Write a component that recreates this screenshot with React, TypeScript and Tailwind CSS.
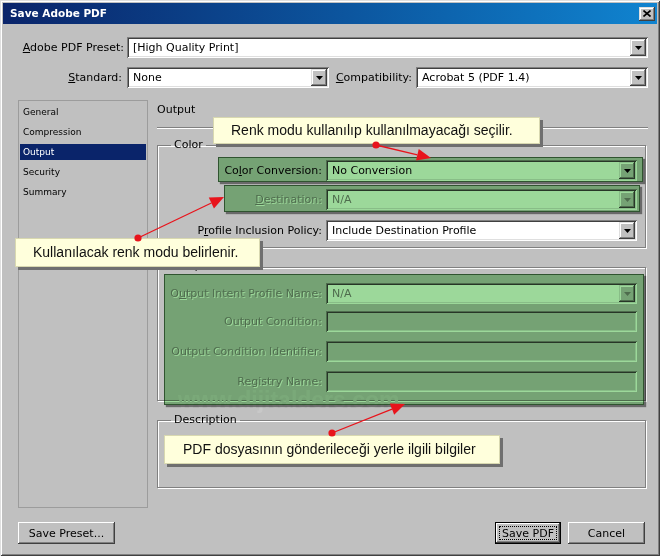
import React from "react";

const RAISED =
  "shadow-[inset_-1px_-1px_0_#404040,inset_1px_1px_0_#dfdfdf,inset_-2px_-2px_0_#808080,inset_2px_2px_0_#fff]";
const SUNKEN =
  "shadow-[inset_1px_1px_0_#808080,inset_-1px_-1px_0_#fff,inset_2px_2px_0_#404040,inset_-2px_-2px_0_#dfdfdf]";
const DIS = "text-[#808080] [text-shadow:1px_1px_0_#fff]";

function DropBtn({ disabled }: { disabled?: boolean }) {
  return (
    <div className={`w-[16px] h-full bg-[#c0c0c0] flex items-center justify-center ${RAISED}`}>
      <svg width="7" height="4" viewBox="0 0 7 4">
        <path d="M0 0h7L3.5 4z" fill={disabled ? "#808080" : "#000"} />
      </svg>
    </div>
  );
}

function Select({
  value,
  disabled,
  className = "",
}: {
  value: string;
  disabled?: boolean;
  className?: string;
}) {
  return (
    <div className={`h-[21px] bg-white flex items-stretch p-[2px] ${SUNKEN} ${className}`}>
      <div className={`flex-1 flex items-center pl-[4px] whitespace-nowrap ${disabled ? "text-[#808080]" : "text-black"}`}>
        {value}
      </div>
      <DropBtn disabled={disabled} />
    </div>
  );
}

function Input({ className = "" }: { className?: string }) {
  return <div className={`h-[21px] bg-[#c0c0c0] ${SUNKEN} ${className}`} />;
}

function Row({
  label,
  children,
  disabled,
  className = "",
}: {
  label: React.ReactNode;
  children: React.ReactNode;
  disabled?: boolean;
  className?: string;
}) {
  return (
    <div className={`flex items-center h-[21px] ${className}`}>
      <div className={`flex-1 text-right pr-[4px] whitespace-nowrap ${disabled ? DIS : ""}`}>{label}</div>
      {children}
    </div>
  );
}

function U({ children }: { children: React.ReactNode }) {
  return <span className="underline underline-offset-[1px]">{children}</span>;
}

function Btn({
  children,
  def,
  className = "",
}: {
  children: React.ReactNode;
  def?: boolean;
  className?: string;
}) {
  if (def) {
    return (
      <div className={`h-[22px] border border-black bg-[#c0c0c0] ${className}`}>
        <div className="h-full flex items-center justify-center shadow-[inset_-1px_-1px_0_#404040,inset_1px_1px_0_#fff,inset_-2px_-2px_0_#808080] p-[3px]">
          <div className="w-full h-full border border-dotted border-black flex items-center justify-center">
            {children}
          </div>
        </div>
      </div>
    );
  }
  return (
    <div
      className={`h-[22px] flex items-center justify-center bg-[#c0c0c0] shadow-[inset_-1px_-1px_0_#404040,inset_1px_1px_0_#fff,inset_-2px_-2px_0_#808080] ${className}`}
    >
      {children}
    </div>
  );
}

function Arrow({ x1, y1, x2, y2 }: { x1: number; y1: number; x2: number; y2: number }) {
  const dx = x2 - x1;
  const dy = y2 - y1;
  const L = Math.hypot(dx, dy);
  const ux = dx / L;
  const uy = dy / L;
  const hl = 14;
  const hw = 6;
  const bx = x2 - ux * hl;
  const by = y2 - uy * hl;
  const pts = `${x2},${y2} ${bx - uy * hw},${by + ux * hw} ${bx + uy * hw},${by - ux * hw}`;
  return (
    <g>
      <line x1={x1} y1={y1} x2={bx} y2={by} stroke="#e8141c" strokeWidth="1.3" />
      <polygon points={pts} fill="#e8141c" />
      <circle cx={x1} cy={y1} r="3.6" fill="#e8141c" />
    </g>
  );
}

const TIP =
  "absolute bg-[#ffffdc] border border-[#d8d8b0] shadow-[3px_3px_0_#6f6f6f] flex items-center font-['Liberation_Sans',Arial,sans-serif] text-[14px] text-[#111] whitespace-nowrap";
const GREEN =
  "absolute bg-[#9cd89a] mix-blend-multiply border border-[#3f6f3f] shadow-[2px_2px_1px_rgba(0,0,0,0.45)]";

export default function App() {
  const items = ["General", "Compression", "Output", "Security", "Summary"];
  return (
    <div className="relative w-[664px] h-[556px] bg-white overflow-hidden font-['DejaVu_Sans',sans-serif] text-[11px] leading-[13px] text-black">
      <div className="w-[660px] h-[556px] bg-[#c0c0c0] p-[3px] flex flex-col shadow-[inset_1px_1px_0_#dfdfdf,inset_-1px_-1px_0_#404040,inset_2px_2px_0_#fff,inset_-2px_-2px_0_#808080]">
        {/* title bar */}
        <div className="h-[21px] flex items-center justify-between bg-linear-to-r from-[#0a246a] to-[#1084d0] pl-[7px] pr-[2px]">
          <span className="text-white font-bold text-[10.5px]">Save Adobe PDF</span>
          <div className={`w-[16px] h-[14px] bg-[#c0c0c0] flex items-center justify-center ${RAISED}`}>
            <svg width="8" height="7" viewBox="0 0 8 7">
              <path d="M0.5 0.5L7.5 6.5M7.5 0.5L0.5 6.5" stroke="#000" strokeWidth="1.6" />
            </svg>
          </div>
        </div>

        <div className="flex flex-col pl-[15px] pr-[9px] pt-[13px]">
          {/* row 1 */}
          <div className="flex items-center h-[21px]">
            <div className="w-[109px] text-right pr-[3px] whitespace-nowrap">
              <U>A</U>dobe PDF Preset:
            </div>
            <Select value="[High Quality Print]" className="flex-1" />
          </div>
          {/* row 2 */}
          <div className="flex items-center h-[21px] mt-[9px]">
            <div className="w-[109px] text-right pr-[5px] whitespace-nowrap">
              <U>S</U>tandard:
            </div>
            <Select value="None" className="w-[202px]" />
            <div className="w-[87px] text-right pr-[4px] whitespace-nowrap">
              <U>C</U>ompatibility:
            </div>
            <Select value="Acrobat 5 (PDF 1.4)" className="flex-1" />
          </div>

          {/* main */}
          <div className="flex items-start mt-[12px]">
            <div className="w-[130px] h-[408px] border border-[#9c9c9c] pt-[3px] px-[1px] flex flex-col gap-[4px] text-[9px]">
              {items.map((it) => (
                <div
                  key={it}
                  className={`h-[16px] leading-[16px] pl-[3px] ${it === "Output" ? "bg-[#0a246a] text-white" : ""}`}
                >
                  {it}
                </div>
              ))}
            </div>

            <div className="flex-1 ml-[9px] flex flex-col">
              <div className="pt-[3px] leading-[14px]">Output</div>
              <div className="mt-[10px] h-[2px] border-t border-t-[#808080] border-b border-b-white" />

              {/* Color */}
              <fieldset className="mt-[9px] mr-[2px] h-[110px] border border-[#808080] shadow-[inset_1px_1px_0_#fff,1px_1px_0_#fff] pl-[4px] pr-[8px] pt-[8px]">
                <legend className="ml-[9px] px-[3px] leading-[14px]">Color</legend>
                <Row label={<>Co<U>l</U>or Conversion:</>}>
                  <Select value="No Conversion" className="w-[311px]" />
                </Row>
                <Row disabled className="mt-[8px]" label={<><U>D</U>estination:</>}>
                  <Select value="N/A" disabled className="w-[311px]" />
                </Row>
                <Row className="mt-[10px]" label={<>P<U>r</U>ofile Inclusion Policy:</>}>
                  <Select value="Include Destination Profile" className="w-[311px]" />
                </Row>
              </fieldset>

              {/* PDF/X */}
              <fieldset className="mt-[12px] mr-[2px] h-[141px] border border-[#808080] shadow-[inset_1px_1px_0_#fff,1px_1px_0_#fff] pl-[4px] pr-[8px] pt-[9px]">
                <legend className="ml-[9px] px-[3px] leading-[14px]">PDF/X</legend>
                <Row disabled label={<>O<U>u</U>tput Intent Profile Name:</>}>
                  <Select value="N/A" disabled className="w-[311px]" />
                </Row>
                <Row disabled className="mt-[7px]" label="Output Condition:">
                  <Input className="w-[311px]" />
                </Row>
                <Row disabled className="mt-[9px]" label="Output Condition Identifier:">
                  <Input className="w-[311px]" />
                </Row>
                <Row disabled className="mt-[9px]" label="Registry Name:">
                  <Input className="w-[311px]" />
                </Row>
              </fieldset>

              {/* Description */}
              <fieldset className="mt-[12px] mr-[2px] h-[75px] border border-[#808080] shadow-[inset_1px_1px_0_#fff,1px_1px_0_#fff]">
                <legend className="ml-[13px] px-[3px] leading-[14px]">Description</legend>
              </fieldset>
            </div>
          </div>

          {/* buttons */}
          <div className="flex items-center justify-between mt-[14px] pr-[3px]">
            <Btn className="w-[97px]">Save Preset...</Btn>
            <div className="flex items-center gap-[7px]">
              <Btn def className="w-[66px]">
                Save PDF
              </Btn>
              <Btn className="w-[77px]">Cancel</Btn>
            </div>
          </div>
        </div>
      </div>

      {/* watermark */}
      <div className="absolute left-[178px] top-[388px] font-['Liberation_Sans',Arial,sans-serif] font-bold text-[23px] leading-[24px] text-[#c8c8c8] whitespace-nowrap">
        www.dijitalders.com
      </div>

      {/* green highlights */}
      <div className={`${GREEN} left-[218px] top-[157px] w-[425px] h-[25px]`} />
      <div className={`${GREEN} left-[224px] top-[185px] w-[416px] h-[27px]`} />
      <div className={`${GREEN} left-[164px] top-[274px] w-[480px] h-[131px]`} />

      {/* tooltips */}
      <div className={`${TIP} left-[213px] top-[117px] w-[327px] h-[27px] pl-[17px]`}>
        Renk modu kullanılıp kullanılmayacağı seçilir.
      </div>
      <div className={`${TIP} left-[15px] top-[238px] w-[245px] h-[29px] pl-[17px]`}>
        Kullanılacak renk modu belirlenir.
      </div>
      <div className={`${TIP} left-[164px] top-[435px] w-[336px] h-[29px] pl-[18px]`}>
        PDF dosyasının gönderileceği yerle ilgili bilgiler
      </div>

      {/* arrows */}
      <svg className="absolute left-0 top-0 pointer-events-none" width="664" height="556">
        <Arrow x1={376} y1={145} x2={431} y2={158} />
        <Arrow x1={138} y1={238} x2={224} y2={197} />
        <Arrow x1={332} y1={433} x2={405} y2={404} />
      </svg>
    </div>
  );
}
